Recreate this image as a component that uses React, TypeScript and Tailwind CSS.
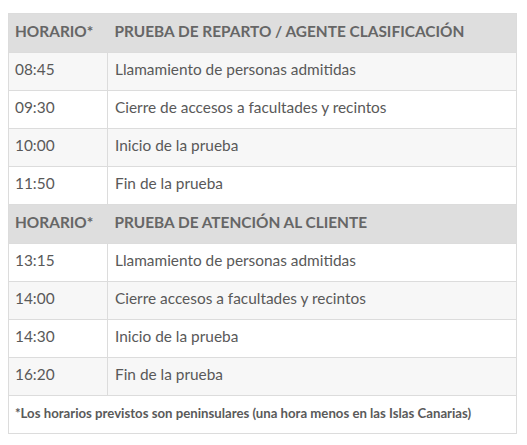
import React from 'react';

type Row = { time: string; text: string };

const reparto: Row[] = [
    { time: '08:45', text: 'Llamamiento de personas admitidas' },
    { time: '09:30', text: 'Cierre de accesos a facultades y recintos' },
    { time: '10:00', text: 'Inicio de la prueba' },
    { time: '11:50', text: 'Fin de la prueba' },
];

const atencion: Row[] = [
    { time: '13:15', text: 'Llamamiento de personas admitidas' },
    { time: '14:00', text: 'Cierre accesos a facultades y recintos' },
    { time: '14:30', text: 'Inicio de la prueba' },
    { time: '16:20', text: 'Fin de la prueba' },
];

const HeadRow: React.FC<{ title: string }> = ({ title }) => (
    <tr className="bg-[#dedede] h-[39px]">
        <th className="text-left font-bold text-[#666] pl-[6px] pb-[3px] border-b border-[#dcdcdc]">HORARIO*</th>
        <th className="text-left font-bold text-[#666] pl-[7px] pb-[3px] border-b border-[#dcdcdc]">{title}</th>
    </tr>
);

const BodyRow: React.FC<{ row: Row; gray: boolean }> = ({ row, gray }) => (
    <tr className={gray ? 'bg-[#f7f7f7] h-[38px]' : 'bg-white h-[38px]'}>
        <td className="pl-[6px] pb-[3px] border-b border-r border-[#dcdcdc] w-[99px]">{row.time}</td>
        <td className="pl-[7px] pb-[3px] border-b border-[#dcdcdc]">{row.text}</td>
    </tr>
);

export default function App() {
    return (
        <div className="bg-white w-[527px] h-[445px] pt-[13px] pl-[8px]" style={{ fontFamily: 'Lato, "Open Sans", sans-serif' }}>
            <table className="w-[509px] border-collapse border border-[#dcdcdc] text-[15.4px] text-[#595959]">
                <tbody>
                    <HeadRow title="PRUEBA DE REPARTO / AGENTE CLASIFICACIÓN" />
                    {reparto.map((r, i) => (
                        <BodyRow key={r.time} row={r} gray={i % 2 === 0} />
                    ))}
                    <HeadRow title="PRUEBA DE ATENCIÓN AL CLIENTE" />
                    {atencion.map((r, i) => (
                        <BodyRow key={r.time} row={r} gray={i % 2 === 1} />
                    ))}
                    <tr className="bg-white h-[38px]">
                        <td colSpan={2} className="pl-[6px] pb-[2px] text-[13.2px] font-bold text-[#5a5a5a]">
                            *Los horarios previstos son peninsulares (una hora menos en las Islas Canarias)
                        </td>
                    </tr>
                </tbody>
            </table>
        </div>
    );
}
